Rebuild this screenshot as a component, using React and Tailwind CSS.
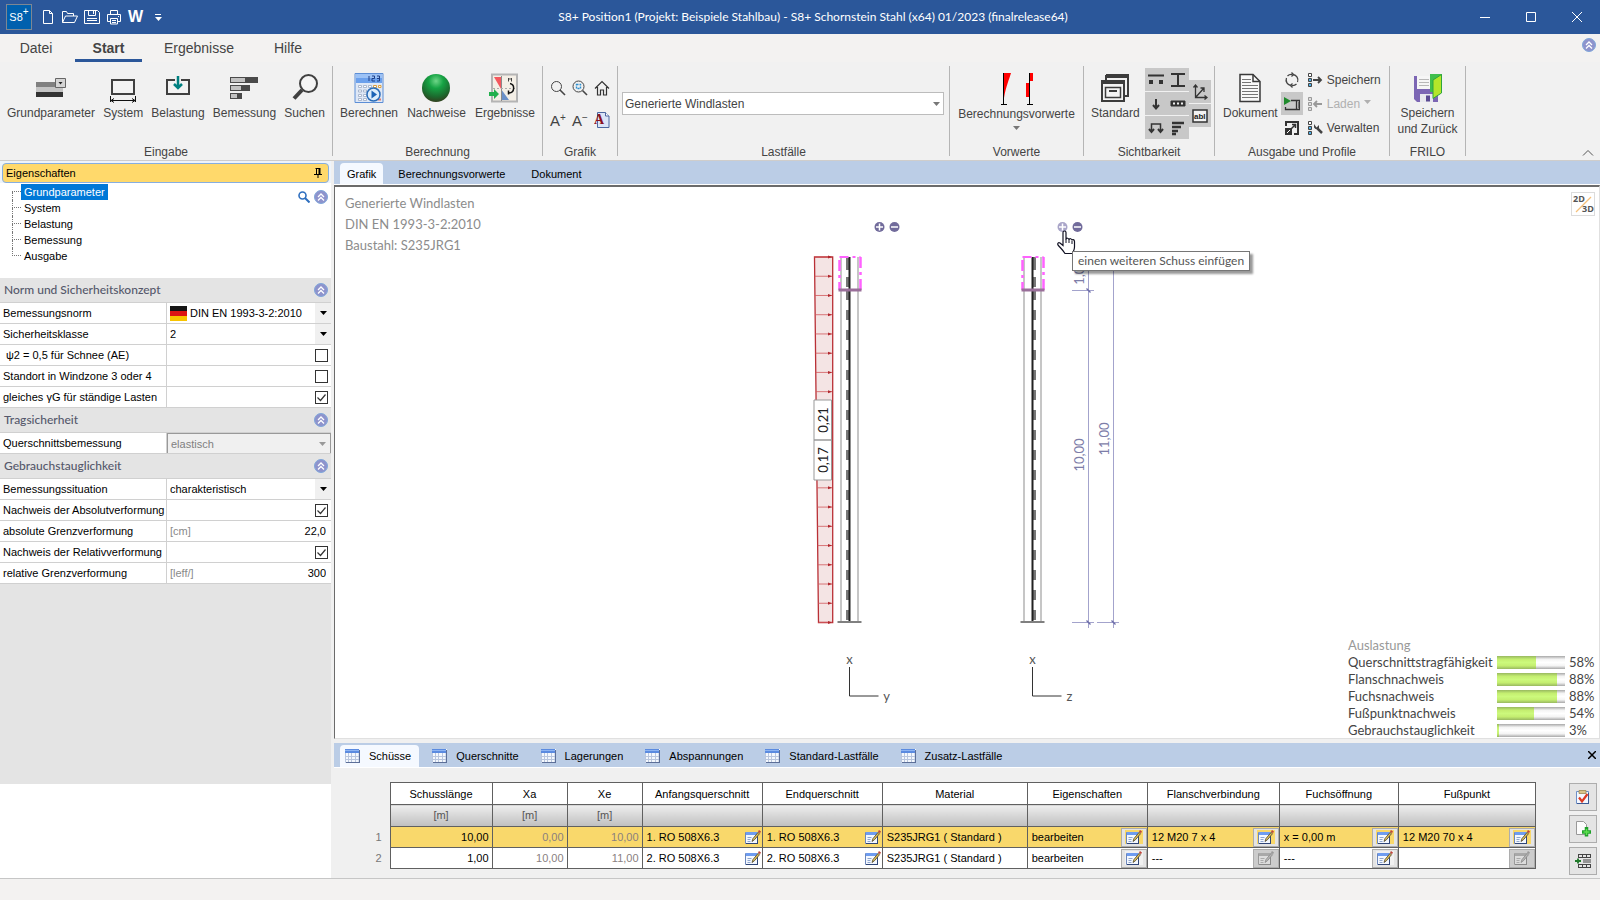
import { useState } from 'react';

/* ---------- small shared icons ---------- */

const Caret = ({ className = '' }) => (
  <svg viewBox="0 0 7 4" className={`h-1 w-[7px] ${className}`} aria-hidden="true">
    <path d="M0 0h7L3.5 4z" fill="currentColor" />
  </svg>
);

const CollapseIcon = () => (
  <svg viewBox="0 0 14 14" className="h-3.5 w-3.5" fill="none" aria-hidden="true">
    <circle cx="7" cy="7" r="6.5" fill="#8e93cc" stroke="#7fa6da" />
    <path d="M4 7l3-3 3 3M4 10.5l3-3 3 3" stroke="#fff" strokeWidth="1.3" />
  </svg>
);

const TableIcon = () => (
  <svg viewBox="0 0 15 14" className="h-3.5 w-[15px]" aria-hidden="true">
    <path d="M0 0h15v14H0z" fill="#f4f8fd" />
    <path d="M0 0h14v4H0z" fill="#5b8be0" />
    <path d="M0 1h14v1H0z" fill="#8db4f2" />
    <path d="M0.5 4v9.5h13.5V4M3.5 4v9M6.5 4v9M10.5 4v9M0 7.5h14M0 10.5h14" stroke="#b9c6de" fill="none" />
    <path d="M14.5 1v13M1 13.5h14" stroke="#5c6f98" />
  </svg>
);

const EditIcon = ({ muted = false }) => (
  <svg viewBox="0 0 16 14" className="h-3.5 w-4" aria-hidden="true">
    <path d="M.5 2.5h12v11H.5z" fill={muted ? '#dcdcdc' : '#f4f8ff'} stroke={muted ? '#9a9a9a' : '#6c86ba'} />
    <path d="M12.5 4v9.500M1 13.500h12" stroke={muted ? '#8a8a8a' : '#2f4577'} />
    <path d="M1 2h11v3H1z" fill={muted ? '#a8a8a8' : '#6e9cf0'} />
    <path d="M2.5 7.5h4M2.5 9.5h3M2.5 11.5h3" stroke={muted ? '#aaa' : '#8ea6cf'} />
    <path d="M7 11.5l1-3 5-6 1.500 1.200-5 6z" fill={muted ? '#b5b5b5' : '#e0c15c'} stroke={muted ? '#8a8a8a' : '#4a4128'} strokeWidth="0.800" />
    <path d="M13 1.5l1-1.5 2 1.5-1 1.8z" fill={muted ? '#999' : '#c0453b'} />
  </svg>
);

/* ---------- ribbon icons ---------- */

const GrundparameterIcon = () => (
  <svg viewBox="0 0 32 32" className="h-8 w-8">
    <path d="M1 10h21v5H1z" fill="#808080" />
    <path d="M1 15h27v5H1z" fill="#c4c4c4" />
    <path d="M1 20h27v5H1z" fill="#333" />
    <path d="M20.5 6.5h10v9h-10z" fill="#d5d5d5" stroke="#666" />
    <path d="M23.5 10h4l-2 2.5z" fill="#222" />
  </svg>
);

const SystemIcon = () => (
  <svg viewBox="0 0 32 32" className="h-8 w-8" fill="none" stroke="#404040">
    <path d="M5 8h22v14H5z" strokeWidth="2" fill="#f3f3f3" />
    <path d="M3.5 24v6M28.5 24v6M4 28.5h24" stroke="#111" />
    <path d="M7 26.5l-3 2 3 2M25 26.5l3 2-3 2" stroke="#111" />
  </svg>
);

const BelastungIcon = () => (
  <svg viewBox="0 0 32 32" className="h-8 w-8" fill="none">
    <path d="M5 8h22v14H5z" fill="#f3f3f3" stroke="#404040" strokeWidth="2" />
    <path d="M13 5h6v5h-6z" fill="#f1f1f1" />
    <path d="M16 4v12M12 12l4 4 4-4" stroke="#008080" strokeWidth="2.5" />
  </svg>
);

const BemessungIcon = () => (
  <svg viewBox="0 0 32 32" className="h-8 w-8">
    <path d="M2 5h28v6H2zM2 13h20v6H2zM2 21h12v6H2z" fill="#4a4a4a" />
    <path d="M3 6h14v4H3zM3 14h10v4H3zM3 22h6v4H3z" fill="#c2c2c2" />
  </svg>
);

const SuchenIcon = () => (
  <svg viewBox="0 0 32 32" className="h-8 w-8" fill="none" stroke="#404040">
    <circle cx="19.5" cy="11.5" r="8.500" strokeWidth="2" fill="#f5f5f5" />
    <path d="M13 18l-8 8.500" strokeWidth="4" />
  </svg>
);

const BerechnenIcon = () => (
  <svg viewBox="0 0 32 32" className="h-8 w-8">
    <path d="M2 1.5h28v29H2z" fill="#dfe8f6" stroke="#5c8ed6" />
    <path d="M3 2h26v9H3z" fill="#6ba0ec" />
    <path d="M3 2h26v4H3z" fill="#9cc2f6" />
    <path d="M16 4v5M19 4h2.5v2.5H19V9h3M24 4h2.5v5H24M24 6.5h2.5" stroke="#1e3f86" fill="none" />
    <path d="M5.5 13.5h3v2h-3zM10.5 13.5h3v2h-3zM15.5 13.5h3v2h-3zM5.5 18h3v2h-3zM10.5 18h3v2h-3zM5.5 22.5h3v2h-3zM10.5 22.5h3v2h-3zM5.5 26.5h3v2h-3zM10.5 26.5h3v2h-3z" fill="#fff" stroke="#9aa9c4" strokeWidth="0.800" />
    <path d="M20.5 13.5h3v2h-3zM25.5 13.5h2.5v2h-2.5z" fill="#fff" stroke="#e0a03c" />
    <path d="M25 26.5h3v2h-3z" fill="#e07a6a" />
    <circle cx="20.5" cy="22.5" r="6.5" fill="#dcecfb" stroke="#2a6cb8" strokeWidth="1.5" />
    <path d="M18.5 18.5l5.5 4-5.5 4z" fill="#1b62b5" />
  </svg>
);

const NachweiseIcon = () => (
  <svg viewBox="0 0 32 32" className="h-8 w-8">
    <defs>
      <radialGradient id="ball" cx="50%" cy="25%" r="75%">
        <stop offset="0" stopColor="#6fd688" />
        <stop offset="0.35" stopColor="#16a344" />
        <stop offset="0.75" stopColor="#1c6a2e" />
        <stop offset="1" stopColor="#31401f" />
      </radialGradient>
    </defs>
    <circle cx="16" cy="16" r="14" fill="url(#ball)" />
  </svg>
);

const ErgebnisseIcon = () => (
  <svg viewBox="0 0 32 32" className="h-8 w-8">
    <path d="M3 2.500h25v27H3z" fill="#f4efe6" stroke="#b4b4b4" strokeWidth="2" />
    <path d="M5 5h7v12z" fill="#f4585e" />
    <path d="M12 17v11h8z" fill="#6a90c8" />
    <path d="M12.500 4v25" stroke="#8a8a8a" />
    <path d="M4 16.5h23" stroke="#aaa" strokeDasharray="2 2" />
    <path d="M19.500 9.500V6l1.500 1.500L22.500 6v3.500" stroke="#444" fill="none" />
    <path d="M21 11.500c5 1 5 9-1 9.500M19.500 18.500v4" stroke="#111" strokeWidth="1.500" fill="none" />
    <path d="M0 20h5v-3l5 5-5 5v-3H0z" fill="#22b04c" />
  </svg>
);

const VorwerteIcon = () => (
  <svg viewBox="0 0 34 34" className="h-[34px] w-[34px]">
    <path d="M4 1h7C9 8 6 14 4 26z" fill="#f00" />
    <path d="M3.5 1v32M1 32.5h6" stroke="#000" fill="none" />
    <path d="M29 1h4v8h-4zM26 11h4v14h-4z" fill="#f00" />
    <path d="M29.5 1v32M27 32.5h6" stroke="#000" fill="none" />
  </svg>
);

const StandardIcon = () => (
  <svg viewBox="0 0 32 32" className="h-8 w-8" fill="none" stroke="#3c3c3c" strokeWidth="2">
    <path d="M7 2h23v4H7z" fill="#3c3c3c" stroke="none" />
    <path d="M7 3v6M29 3v21h-4" />
    <path d="M3 9h22v20H3z" fill="#f3f3f3" />
    <path d="M2 8h24v4H2z" fill="#3c3c3c" stroke="none" />
    <path d="M6.5 15.5h15v10h-15z" strokeWidth="1.5" />
    <path d="M10 19h8" />
  </svg>
);

const DokumentIcon = () => (
  <svg viewBox="0 0 32 32" className="h-8 w-8" fill="none" stroke="#3a3a3a">
    <path d="M6 2.5h13l7 7v20H6z" fill="#fafafa" strokeWidth="1.5" />
    <path d="M19 2.5v7h7" strokeWidth="1.5" />
    <path d="M8 7.5h9M8 10.5h9M8 13.5h16M8 16.5h16M8 19.5h16M8 22.5h16M8 25.5h16" stroke="#777" />
  </svg>
);

const SpeichernZurueckIcon = () => (
  <svg viewBox="0 0 32 32" className="h-8 w-8">
    <path d="M2 4h24v26H5l-3-3z" fill="#7c66b4" />
    <path d="M5 4h14v13H5z" fill="#f6f6f6" />
    <path d="M7 7.5h10M7 10.5h10M7 13.5h10" stroke="#b8b8b8" />
    <path d="M8 22h13v8H8z" fill="#e8e8ee" />
    <path d="M14 23.5h4v6h-4z" fill="#5b4a92" />
    <path d="M18 2h12v18H18z" fill="#3fbf4d" />
    <path d="M21 8l8.5-5.5V21L21 26.5z" fill="#b4e62a" stroke="#2fa53c" />
  </svg>
);

/* ---------- title bar ---------- */

const QuickAccess = () => (
  <div className="flex items-center text-white">
    <button aria-label="S8+" className="mr-2 flex h-[26px] w-[26px] items-center justify-center border border-[#7d8793] bg-[#0060ae] text-[11px] leading-none">
      S8<sup className="text-[10px]">+</sup>
    </button>
    <button aria-label="Neu" className="w-[22px]">
      <svg viewBox="0 0 16 16" className="h-4 w-4" fill="none" stroke="#fff">
        <path d="M3.5 1.5h6l3 3v10h-9zM9.5 1.5v3h3" />
      </svg>
    </button>
    <button aria-label="Öffnen" className="w-[22px]">
      <svg viewBox="0 0 16 16" className="h-4 w-4" fill="none" stroke="#fff">
        <path d="M.5 13.5v-11h4l1 2h6v2.5M.5 13.5l3-6.5h12l-3 6.5z" />
      </svg>
    </button>
    <button aria-label="Speichern" className="w-[22px]">
      <svg viewBox="0 0 16 16" className="h-4 w-4" fill="none" stroke="#fff">
        <path d="M.5 1.5h13l2 2v11H.5zM4.5 1.5v5h7v-5M9.5 2v3M3 9.5h10M3 11.5h10" />
      </svg>
    </button>
    <button aria-label="Drucken" className="w-[22px]">
      <svg viewBox="0 0 16 16" className="h-4 w-4" fill="none" stroke="#fff">
        <path d="M4.5 5.5v-4h7v4M4.5 12.5h-3v-7h13v7h-3M4.5 9.5h7v5.5h-7zM6 11.5h4M6 13.5h4M12 7.5h1" />
      </svg>
    </button>
    <button aria-label="Word" className="w-5 text-left text-base font-bold leading-none">W</button>
    <button aria-label="Anpassen" className="ml-1 flex w-3 flex-col items-center gap-0.5">
      <span className="h-px w-1.5 bg-white" />
      <Caret className="w-1.5" />
    </button>
  </div>
);

const TitleBar = () => (
  <header className="grid h-[34px] shrink-0 grid-cols-[1fr_auto_1fr] items-center bg-[#2b579a] pl-1.5 text-white">
    <QuickAccess />
    <h1 className="pl-5 font-[Lato,'Open_Sans',sans-serif] text-xs">
      S8+ Position1 (Projekt: Beispiele Stahlbau) - S8+ Schornstein Stahl (x64) 01/2023 (finalrelease64)
    </h1>
    <div className="flex justify-end">
      <button aria-label="Minimieren" className="grid h-[34px] w-[46px] place-items-center">
        <svg viewBox="0 0 10 10" className="h-2.5 w-2.5" stroke="#fff"><path d="M0 5.5h10" /></svg>
      </button>
      <button aria-label="Maximieren" className="grid h-[34px] w-[46px] place-items-center">
        <svg viewBox="0 0 10 10" className="h-2.5 w-2.5" fill="none" stroke="#fff"><path d="M.5.5h9v9h-9z" /></svg>
      </button>
      <button aria-label="Schließen" className="grid h-[34px] w-[46px] place-items-center">
        <svg viewBox="0 0 10 10" className="h-2.5 w-2.5" stroke="#fff"><path d="M0 0l10 10M10 0L0 10" /></svg>
      </button>
    </div>
  </header>
);

const MENU = ['Datei', 'Start', 'Ergebnisse', 'Hilfe'];

const MenuTabs = () => (
  <nav className="flex h-7 shrink-0 items-stretch bg-[#f3f2f1] pr-1 text-sm text-[#444]">
    {MENU.map((item) => (
      <button
        key={item}
        className={
          item === 'Start'
            ? 'ml-[3px] w-[67px] border-b-[3px] border-[#2b579a] pt-[3px] font-bold'
            : item === 'Datei'
              ? 'w-[72px]'
              : item === 'Hilfe'
                ? 'ml-4 w-16'
                : 'ml-4 w-[82px]'
        }
      >
        {item}
      </button>
    ))}
    <button aria-label="Einklappen" className="ml-auto self-start pt-1">
      <CollapseIcon />
    </button>
  </nav>
);

/* ---------- ribbon ---------- */

const Group = ({ label, width, children }) => (
  <section className={`flex shrink-0 flex-col border-r border-[#b5b5b5] ${width}`}>
    <div className="flex flex-1 pt-1.5">{children}</div>
    <h2 className="h-2.5 text-center leading-3">{label}</h2>
  </section>
);

const BigButton = ({ icon, children }) => (
  <button className="flex flex-col items-center gap-px self-start leading-4">
    {icon}
    <span>{children}</span>
  </button>
);

const Tile = ({ label, children }) => (
  <button aria-label={label} aria-pressed="true" className="grid h-[23px] w-[22px] place-items-center bg-[#c8c8c8]">
    <svg viewBox="0 0 16 16" className="h-4 w-4" fill="none" stroke="#333">{children}</svg>
  </button>
);

const Ribbon = () => (
  <div className="flex h-[99px] shrink-0 items-stretch border-b border-[#cfcdcb] bg-[#f1f1f1] py-1 text-xs text-[#444]">
    <Group label="Eingabe" width="w-[333px]">
      <div className="flex flex-1 justify-between px-[7px]">
        <BigButton icon={<GrundparameterIcon />}>Grundparameter</BigButton>
        <BigButton icon={<SystemIcon />}>System</BigButton>
        <BigButton icon={<BelastungIcon />}>Belastung</BigButton>
        <BigButton icon={<BemessungIcon />}>Bemessung</BigButton>
        <BigButton icon={<SuchenIcon />}>Suchen</BigButton>
      </div>
    </Group>

    <Group label="Berechnung" width="w-[210px]">
      <div className="flex flex-1 justify-between px-[7px]">
        <BigButton icon={<BerechnenIcon />}>Berechnen</BigButton>
        <BigButton icon={<NachweiseIcon />}>Nachweise</BigButton>
        <BigButton icon={<ErgebnisseIcon />}>Ergebnisse</BigButton>
      </div>
    </Group>

    <Group label="Grafik" width="w-[75px]">
      <div className="grid flex-1 grid-cols-3 grid-rows-[32px_32px] place-items-center px-1">
        <button aria-label="Lupe">
          <svg viewBox="0 0 16 16" className="h-4 w-4" fill="none" stroke="#444">
            <circle cx="6.5" cy="6.5" r="5" /><path d="M10 10l5 5" strokeWidth="1.6" />
          </svg>
        </button>
        <button aria-label="Ausschnitt">
          <svg viewBox="0 0 16 16" className="h-4 w-4" fill="none" stroke="#444">
            <circle cx="6.5" cy="6.5" r="5.500" /><path d="M10.500 10.500l4.500 4.500" strokeWidth="1.6" />
            <path d="M4.5 4.5h4v4h-4z" stroke="#2d8fd0" strokeWidth="1.4" strokeDasharray="2 1" />
          </svg>
        </button>
        <button aria-label="Gesamtansicht">
          <svg viewBox="0 0 16 16" className="h-4 w-4" fill="none" stroke="#333" strokeWidth="1.2">
            <path d="M1 8.5l7-7 7 7M3.5 7v8h3v-5h3v5h3V7" />
          </svg>
        </button>
        <button aria-label="Schrift größer" className="text-[15px] leading-none">A<sup className="text-[10px]">+</sup></button>
        <button aria-label="Schrift kleiner" className="text-[15px] leading-none">A<sup className="text-[10px]">−</sup></button>
        <button aria-label="Schriftart">
          <svg viewBox="0 0 16 16" className="h-4 w-4">
            <path d="M3.500.5h8l3.500 3.500v11.500H3.500z" fill="#dbe5f7" stroke="#4c67a0" />
            <path d="M11.500.5V4H15" fill="#fff" stroke="#4c67a0" />
            <text x="0" y="12" fontSize="14" fontWeight="bold" fill="#8b1220" className="font-['Liberation_Serif',serif]">A</text>
          </svg>
        </button>
      </div>
    </Group>

    <Group label="Lastfälle" width="w-[332px]">
      <div className="grid flex-1 items-start pl-1 pr-[5px] pt-5">
        <select aria-label="Lastfälle" className="col-start-1 row-start-1 h-[23px] w-full appearance-none rounded-none border border-[#bcbcbc] bg-white px-0.5 pt-px">
          <option>Generierte Windlasten</option>
        </select>
        <Caret className="pointer-events-none col-start-1 row-start-1 mr-1 mt-2.5 w-1.5 justify-self-end text-[#777]" />
      </div>
    </Group>

    <Group label="Vorwerte" width="w-[134px]">
      <button className="flex flex-1 flex-col items-center self-start leading-4">
        <VorwerteIcon />
        <span>Berechnungsvorwerte</span>
        <Caret className="mt-1 w-1.5 text-[#777]" />
      </button>
    </Group>

    <Group label="Sichtbarkeit" width="w-[131px]">
      <div className="flex flex-1 pl-[7px]">
        <BigButton icon={<StandardIcon />}>Standard</BigButton>
        <div className="-mt-1 ml-auto mr-[3px] flex items-start">
          <div className="grid grid-cols-2 gap-y-px">
            <Tile label="Auflager"><path d="M0 3.5h16" strokeWidth="2" /><path d="M1 8h4v4H1zM11 8h4v4h-4z" fill="#333" stroke="none" /></Tile>
            <Tile label="Querschnitt"><path d="M1 2h14M1 14h14M8 2v12" strokeWidth="2" /></Tile>
            <Tile label="Lasten"><path d="M8 3v9M5 9l3 3.500L11 9" strokeWidth="2" /></Tile>
            <Tile label="Bemaßung"><path d="M1 5h14v5H1z" fill="#333" /><path d="M3 6.500h2v2H3zM7 6.500h2v2H7zM11 6.500h2v2h-2z" fill="#eee" stroke="none" /></Tile>
            <Tile label="Lastbild"><path d="M3.500 11V4h9v7" strokeWidth="1.500" /><path d="M1 9l2.500 3L6 9M10 9l2.500 3L15 9" strokeWidth="2" /></Tile>
            <Tile label="Ausnutzung"><path d="M2 3h12M2 7h9M2 11h6M2 14h4" strokeWidth="2.5" /></Tile>
          </div>
          <div className="mt-3 grid gap-y-px">
            <Tile label="Achsen"><path d="M3.5 1v12.5H15M1.5 3.5l2-2.5 2 2.5M12.5 11.5l2.5 2-2.5 2M3.5 13.5L12 4M8.5 4H12v4" strokeWidth="1.3" /></Tile>
            <Tile label="Texte">
              <path d="M1 2h14v12H1z" fill="#f3f3f3" strokeWidth="1.5" />
              <text x="2" y="11" fontSize="8" fontWeight="bold" fill="#222" stroke="none">abl</text>
            </Tile>
          </div>
        </div>
      </div>
    </Group>

    <Group label="Ausgabe und Profile" width="w-[175px]">
      <div className="flex flex-1 pl-2">
        <BigButton icon={<DokumentIcon />}>Dokument</BigButton>
        <div className="-mt-1 ml-[3px] grid h-[71px] grid-cols-[22px_auto] grid-rows-[23px_23px_23px] gap-y-px">
          <button aria-label="Aktualisieren" className="grid place-items-center">
            <svg viewBox="0 0 16 16" className="h-4 w-4" fill="none" stroke="#444" strokeWidth="1.300">
              <path d="M9 2.500a5.500 5.500 0 0 1 4.500 7.500M7 13.500A5.500 5.500 0 0 1 2.500 6M3.500 4a5.500 5.500 0 0 1 5-1.500M12.500 12a5.500 5.500 0 0 1-5 1.500" />
              <path d="M7.500.5l2 2-2 2M8.500 11.500l-2 2 2 2" />
            </svg>
          </button>
          <button className="flex items-center gap-1 pl-1">
            <svg viewBox="0 0 16 16" className="h-4 w-4" fill="none" stroke="#444">
              <path d="M1.5 1.5h3v3h-3z" fill="#fff" /><path d="M1.5 6.5h3v3h-3zM1.5 11.5h3v3h-3z" fill="#4fb0e8" />
              <path d="M6 8h8M11 5l3 3-3 3" strokeWidth="1.8" />
            </svg>
            Speichern
          </button>
          <button aria-label="Vorschau" className="grid place-items-center bg-[#c8c8c8]">
            <svg viewBox="0 0 16 16" className="h-4 w-4" fill="none" stroke="#333">
              <path d="M7 4.500h8.500v9H1.500V11M12.500 5v8" strokeWidth="1.300" /><path d="M14 7h1M14 9h1M14 11h1" />
              <path d="M0 1l7 4-7 4z" fill="#1f8a2c" stroke="none" />
            </svg>
          </button>
          <button disabled className="flex items-center gap-1 pl-1 text-[#b0b0b0]">
            <svg viewBox="0 0 16 16" className="h-4 w-4" fill="none" stroke="#999">
              <path d="M1.5 1.5h3v3h-3zM1.5 6.5h3v3h-3zM1.5 11.5h3v3h-3z" fill="#ddd" />
              <path d="M15 8H7M10 5L7 8l3 3" strokeWidth="1.8" />
            </svg>
            Laden
            <Caret className="mb-1 w-1.5" />
          </button>
          <button aria-label="Vergrößern" className="grid place-items-center">
            <svg viewBox="0 0 16 16" className="h-4 w-4" fill="none" stroke="#333">
              <path d="M2 6V2h12v12h-4" strokeWidth="2" /><path d="M1 8h7v7H1z" fill="#333" stroke="none" />
              <path d="M3 13l3-3" stroke="#fff" /><path d="M7 9l4-4M8 4.5h3.5V8" strokeWidth="1.5" />
            </svg>
          </button>
          <button className="flex items-center gap-1 pl-1">
            <svg viewBox="0 0 16 16" className="h-4 w-4" fill="none" stroke="#444">
              <path d="M1.5 1.5h3v3h-3z" fill="#fff" /><path d="M1.5 6.5h3v3h-3zM1.5 11.5h3v3h-3z" fill="#4fb0e8" />
              <path d="M10 8l5 5" strokeWidth="2.500" />
              <path d="M7 4v3.500l1.500 1.500H11l1-1V5L9.500 7.500z" fill="#444" stroke="none" />
            </svg>
            Verwalten
          </button>
        </div>
      </div>
    </Group>

    <Group label="FRILO" width="w-[76px]">
      <button className="flex flex-1 flex-col items-center self-start leading-4">
        <SpeichernZurueckIcon />
        <span className="mt-px">Speichern</span>
        <span>und Zurück</span>
      </button>
    </Group>

    <button aria-label="Menüband reduzieren" className="ml-auto mr-1.5 self-end">
      <svg viewBox="0 0 12 6" className="h-1.5 w-3" fill="none" stroke="#555"><path d="M1 5.5l5-5 5 5" /></svg>
    </button>
  </div>
);

/* ---------- properties panel ---------- */

const TREE = ['Grundparameter', 'System', 'Belastung', 'Bemessung', 'Ausgabe'];

const Flag = () => (
  <svg viewBox="0 0 17 15" className="h-[15px] w-[17px]">
    <path d="M0 0h17v5H0z" fill="#151515" />
    <path d="M0 5h17v5H0z" fill="#dc1414" />
    <path d="M0 10h17v5H0z" fill="#f8c400" />
  </svg>
);

const SECTIONS = [
  {
    title: 'Norm und Sicherheitskonzept',
    rows: [
      { id: 'norm', label: 'Bemessungsnorm', type: 'select', value: 'DIN EN 1993-3-2:2010', flag: true },
      { id: 'klasse', label: 'Sicherheitsklasse', type: 'select', value: '2' },
      { id: 'psi2', label: 'ψ2 = 0,5 für Schnee (AE)', type: 'check', value: false, indent: true },
      { id: 'windzone', label: 'Standort in Windzone 3 oder 4', type: 'check', value: false },
      { id: 'gamma', label: 'gleiches γG für ständige Lasten', type: 'check', value: true },
    ],
  },
  {
    title: 'Tragsicherheit',
    rows: [{ id: 'querschnitt', label: 'Querschnittsbemessung', type: 'select', value: 'elastisch', disabled: true }],
  },
  {
    title: 'Gebrauchstauglichkeit',
    rows: [
      { id: 'situation', label: 'Bemessungssituation', type: 'select', value: 'charakteristisch' },
      { id: 'absolut', label: 'Nachweis der Absolutverformung', type: 'check', value: true },
      { id: 'absGrenz', label: 'absolute Grenzverformung', type: 'number', value: '22,0', unit: '[cm]' },
      { id: 'relativ', label: 'Nachweis der Relativverformung', type: 'check', value: true },
      { id: 'relGrenz', label: 'relative Grenzverformung', type: 'number', value: '300', unit: '[leff/]' },
    ],
  },
];

const Field = ({ row }) => {
  if (row.type === 'select') {
    return (
      <div className={`flex h-full items-center ${row.disabled ? 'border border-b-0 border-[#999] bg-[#f0f0f0] text-[#808080]' : ''}`}>
        {row.flag && <span className="pl-[3px]"><Flag /></span>}
        <div className="grid h-full flex-1 items-center">
          <select
            id={row.id}
            disabled={row.disabled}
            className="col-start-1 row-start-1 h-full w-full appearance-none bg-transparent px-[3px] pt-px opacity-100"
          >
            <option>{row.value}</option>
          </select>
          <span className={`pointer-events-none col-start-1 row-start-1 grid h-full w-4 place-items-center justify-self-end ${row.disabled ? 'text-[#999]' : 'bg-[#f0f0f0] text-black'}`}>
            <Caret className="w-1.5" />
          </span>
        </div>
      </div>
    );
  }
  if (row.type === 'check') {
    return (
      <div className="flex h-full items-center justify-end pr-[3px]">
        <span className="grid">
          <input
            id={row.id}
            type="checkbox"
            defaultChecked={row.value}
            className="peer col-start-1 row-start-1 h-[13px] w-[13px] appearance-none border border-[#333] bg-white"
          />
          <svg viewBox="0 0 13 13" className="pointer-events-none invisible col-start-1 row-start-1 h-[13px] w-[13px] peer-checked:visible" fill="none" stroke="#333">
            <path d="M2.5 6.5l3 3 5-6" strokeWidth="1.2" />
          </svg>
        </span>
      </div>
    );
  }
  return (
    <div className="flex h-full items-center pl-[3px] pr-[5px]">
      <span className="text-[#8a8a8a]">{row.unit}</span>
      <input id={row.id} type="text" defaultValue={row.value} className="w-full min-w-0 flex-1 bg-transparent text-right" />
    </div>
  );
};

const PropertiesPanel = () => (
  <aside className="flex w-[331px] shrink-0 flex-col bg-white text-[11px] text-black">
    <div className="bg-[#eef4fb] px-0.5 pt-0.5">
      <h2 className="flex h-5 items-center justify-between rounded-sm border border-[#86aee0] bg-[#ffd96b] pl-[3px] pr-1.5">
        Eigenschaften
        <button aria-label="Anheften">
          <svg viewBox="0 0 8 10" className="h-2.5 w-2" fill="none" stroke="#000">
            <path d="M2.5 0v6M1.5.5h4.5M0 6.5h8M4 6.5V10" /><path d="M5.5 0v6" strokeWidth="2" />
          </svg>
        </button>
      </h2>
    </div>

    <div className="flex h-[95px] shrink-0 items-start justify-between pr-[3px]">
      <ul className="ml-3 mt-px">
        {TREE.map((node, i) => (
          <li key={node} className="flex h-4 items-stretch">
            <span className="flex w-[9px] flex-col">
              <span className={`h-2 w-full border-b border-dotted border-[#777] ${i > 0 ? 'border-l' : ''}`} />
              <span className={`w-full flex-1 border-dotted border-[#777] ${i < TREE.length - 1 ? 'border-l' : ''}`} />
            </span>
            <button className={i === 0 ? 'bg-[#0078d7] px-[3px] leading-4 text-white' : 'pl-[3px] leading-4'}>{node}</button>
          </li>
        ))}
      </ul>
      <div className="mt-[7px] flex items-center gap-1">
        <button aria-label="Suchen">
          <svg viewBox="0 0 12 12" className="h-3 w-3" fill="none" stroke="#2f6fbf">
            <circle cx="4.5" cy="4.5" r="3.5" strokeWidth="1.6" /><path d="M7 7l4.5 4.5" strokeWidth="2" />
          </svg>
        </button>
        <button aria-label="Alle einklappen"><CollapseIcon /></button>
      </div>
    </div>

    {SECTIONS.map((section) => (
      <section key={section.title}>
        <h3 className="flex h-[25px] items-center justify-between border-b border-[#d0d0d0] bg-[#e4e4e4] pl-1 pr-[3px] font-[Lato,'Open_Sans',sans-serif] text-xs font-medium text-[#55586b]">
          {section.title}
          <button aria-label={`${section.title} einklappen`}><CollapseIcon /></button>
        </h3>
        {section.rows.map((row) => (
          <div key={row.id} className="flex h-[21px] border-b border-[#d0d0d0]">
            <label htmlFor={row.id} className={`w-[167px] shrink-0 border-r border-[#d0d0d0] leading-5 whitespace-nowrap ${row.indent ? 'pl-1.5' : 'pl-[3px]'}`}>
              {row.label}
            </label>
            <div className="min-w-0 flex-1">
              <Field row={row} />
            </div>
          </div>
        ))}
      </section>
    ))}
    <div className="h-[200px] bg-[#e4e4e4]" />
  </aside>
);

/* ---------- drawing ---------- */

const ARROWS = Array.from({ length: 20 }, (_, i) => {
  const y = 257 + (i * 365.5) / 19;
  return { y, x: 814.5 + (i * 4) / 19 };
});

// side +1 / -1: which side of the axis carries the dashed reference fibre
const Stack = ({ x, side }) => (
  <g fill="none">
    <path d={`M${x - 8.5} 257V622M${x + 8.5} 257V622`} stroke="#b4b4b4" strokeWidth="1.5" />
    <path d={`M${x + side * 2} 257V270M${x + side * 2} 277V287`} stroke="#777" strokeWidth="3" />
    <path d={`M${x + side * 2} 290V622`} stroke="#777" strokeWidth="3" strokeDasharray="10 10" />
    <path d={`M${x} 257V623`} stroke="#222" strokeWidth="2" />
    <path d={`M${x - 10} 257h21`} stroke="#ff62ff" strokeWidth="2" strokeDasharray="9 4 3 4" />
    <path d={`M${x - 10} 260v30M${x + 11} 257v33`} stroke="#ff62ff" strokeWidth="2.5" strokeDasharray="11 4 3 4" />
    <path d={`M${x - 11} 290h23`} stroke="#9a6f9a" strokeWidth="3" />
    <path d={`M${x - 12} 622h24`} stroke="#808080" strokeWidth="2" />
  </g>
);

const PlusMinus = ({ x, faded }) => (
  <g>
    <circle cx={x} cy="227" r="5" fill={faded ? '#a9a5c8' : '#716b9b'} />
    <path d={`M${x - 3.5} 227h7M${x} 223.5v7`} stroke="#fff" strokeWidth="1.5" />
    <circle cx={x + 15} cy="227" r="5" fill="#716b9b" />
    <path d={`M${x + 11.5} 227h7`} stroke="#fff" strokeWidth="1.5" />
  </g>
);

const Axes = ({ x, name }) => (
  <g>
    <path d={`M${x} 667v29h29`} fill="none" stroke="#333" />
    <text x={x} y="664" textAnchor="middle">x</text>
    <text x={x + 37} y="701" textAnchor="middle">{name}</text>
  </g>
);

const Drawing = () => (
  <svg viewBox="727 187 480 552" className="h-[552px] w-[480px] text-[13px]" fill="#555">
    <path d="M814.5 257h18.2v365.5h-14.2z" fill="#f4e4e4" stroke="#b93036" strokeWidth="1.3" />
    {ARROWS.map((a) => (
      <g key={a.y}>
        <path d={`M${a.x} ${a.y}H832`} stroke="#d0585c" strokeWidth="0.8" />
        <path d={`M828 ${a.y - 1.5}l4 1.5-4 1.5z`} fill="#b0272d" />
      </g>
    ))}
    <g stroke="#999" fill="#fff">
      <path d="M814 400h17.5v40H814zM814 440h17.5v40H814z" />
    </g>
    <text transform="translate(828 420) rotate(-90)" textAnchor="middle" fill="#222">0,21</text>
    <text transform="translate(828 460) rotate(-90)" textAnchor="middle" fill="#222">0,17</text>

    <Stack x={849.5} side={-1} />
    <Stack x={1032.5} side={1} />
    <PlusMinus x={879.5} />
    <PlusMinus x={1062.5} faded />

    <g stroke="#a3a3cc" fill="none">
      <path d="M1088.5 251v377M1113.5 251v377M1072 290.5h22M1072 622.5h22M1097 622.5h22" />
      <path d="M1086.5 288.5l4 4M1086.5 620.5l4 4M1111.5 620.5l4 4" stroke="#6c6ca8" strokeWidth="1.3" />
    </g>
    <g fill="#7d7da8">
      <text transform="translate(1084 272) rotate(-90)" textAnchor="middle">1,00</text>
      <text transform="translate(1084 455) rotate(-90)" textAnchor="middle">10,00</text>
      <text transform="translate(1109 439) rotate(-90)" textAnchor="middle">11,00</text>
    </g>

    <Axes x={849.5} name="y" />
    <Axes x={1032.5} name="z" />
  </svg>
);

const USAGE = [
  { label: 'Querschnittstragfähigkeit', percent: 58 },
  { label: 'Flanschnachweis', percent: 88 },
  { label: 'Fuchsnachweis', percent: 88 },
  { label: 'Fußpunktnachweis', percent: 54 },
  { label: 'Gebrauchstauglichkeit', percent: 3 },
];

const Utilisation = () => (
  <div className="absolute right-0 -bottom-px w-[251px] text-[13px] leading-[17px] text-[#444]">
    <h3 className="text-[#999]">Auslastung</h3>
    {USAGE.map((u) => (
      <div key={u.label} className="flex items-center">
        <span className="w-[149px] whitespace-nowrap">{u.label}</span>
        <span className="h-[13px] w-[68px] bg-[linear-gradient(#a8a8a8,#f4f4f4_25%,#fff_50%,#f4f4f4_75%,#a8a8a8)]">
          <span
            className="block h-full bg-[linear-gradient(#98b860,#c4ee70_25%,#ccf97c_50%,#c4ee70_75%,#98b860)]"
            style={{ width: `${u.percent}%` }}
          />
        </span>
        <span className="pl-1">{u.percent}%</span>
      </div>
    ))}
  </div>
);

const Canvas = () => (
  <div className="relative flex flex-1 justify-center overflow-hidden border-t-2 border-l border-r border-b border-t-[#6b6b6b] border-r-[#e0e0e0] border-b-[#e0e0e0] border-l-[#6b6b6b] bg-white font-[Lato,'Open_Sans',sans-serif]">
    <div className="absolute top-1.5 left-2.5 text-[13px] leading-[21px] text-[#8c8c8c]">
      <p>Generierte Windlasten</p>
      <p>DIN EN 1993-3-2:2010</p>
      <p>Baustahl: S235JRG1</p>
    </div>
    <button aria-label="2D/3D" className="absolute top-[5px] right-1 border border-[#dcdcdc]">
      <svg viewBox="0 0 22 22" className="h-[22px] w-[22px] font-['Open_Sans',sans-serif] text-[9px] font-bold" fill="#555">
        <path d="M4 19L19 4" stroke="#f5c07a" strokeWidth="1.2" />
        <text x="1" y="9">2D</text>
        <text x="10" y="19">3D</text>
      </svg>
    </button>

    <div className="relative">
      <Drawing />
      <svg viewBox="0 0 20 26" className="absolute top-[43px] left-[329px] h-[26px] w-5">
        <path
          d="M7 2.5c0-2 3-2 3 0v7c0-2 3-1.5 3 .5 0-2 3-1.5 3 .5 0-1.5 2.5-1 2.5 1V17c0 3-1 4-2 6.5H9C7 20 4.500 18 2 15c-1-1.5.5-3 2-2l3 2.5z"
          fill="#fff" stroke="#112" strokeWidth="1.2"
        />
        <path d="M10 9v4M13 10v3M16 11v3" stroke="#112" />
      </svg>
      <div role="tooltip" className="absolute top-[64px] left-[345px] h-5 border border-[#767676] bg-white px-[5px] text-xs leading-[18px] whitespace-nowrap text-[#555] shadow-[3px_3px_2px_rgba(0,0,0,0.4)]">
        einen weiteren Schuss einfügen
      </div>
    </div>

    <Utilisation />
  </div>
);

const VIEWS = ['Grafik', 'Berechnungsvorwerte', 'Dokument'];

const ViewTabs = () => {
  const [active, setActive] = useState('Grafik');
  return (
    <div role="tablist" className="flex h-6 shrink-0 items-end gap-1 border-b border-white bg-[#bbcde6] pl-1.5 text-[11px] text-black">
      {VIEWS.map((view) => (
        <button
          key={view}
          role="tab"
          aria-selected={view === active}
          onClick={() => setActive(view)}
          className={`h-[21px] px-[7px] pt-px ${view === active ? 'rounded-t-sm bg-[#f5f9ff]' : 'mx-1'}`}
        >
          {view}
        </button>
      ))}
    </div>
  );
};

/* ---------- table panel ---------- */

const TABLE_TABS = ['Schüsse', 'Querschnitte', 'Lagerungen', 'Abspannungen', 'Standard-Lastfälle', 'Zusatz-Lastfälle'];

const COLUMNS = [
  { title: 'Schusslänge', unit: '[m]', width: 'w-[102px]' },
  { title: 'Xa', unit: '[m]', width: 'w-[75px]' },
  { title: 'Xe', unit: '[m]', width: 'w-[75px]' },
  { title: 'Anfangsquerschnitt', width: 'w-[120px]' },
  { title: 'Endquerschnitt', width: 'w-[120px]' },
  { title: 'Material', width: 'w-[145px]' },
  { title: 'Eigenschaften', width: 'w-[120px]' },
  { title: 'Flanschverbindung', width: 'w-[132px]' },
  { title: 'Fuchsöffnung', width: 'w-[119px]' },
  { title: 'Fußpunkt', width: 'w-[137px]' },
];

const ROWS = [
  [
    { text: '10,00', kind: 'num' }, { text: '0,00', kind: 'calc' }, { text: '10,00', kind: 'calc' },
    { text: '1. RO 508X6.3', kind: 'link' }, { text: '1. RO 508X6.3', kind: 'link' },
    { text: 'S235JRG1 ( Standard )' }, { text: 'bearbeiten', kind: 'edit' },
    { text: '12 M20 7 x 4', kind: 'edit' }, { text: 'x = 0,00 m', kind: 'edit' }, { text: '12 M20 70 x 4', kind: 'edit' },
  ],
  [
    { text: '1,00', kind: 'num' }, { text: '10,00', kind: 'calc' }, { text: '11,00', kind: 'calc' },
    { text: '2. RO 508X6.3', kind: 'link' }, { text: '2. RO 508X6.3', kind: 'link' },
    { text: 'S235JRG1 ( Standard )' }, { text: 'bearbeiten', kind: 'edit' },
    { text: '---', kind: 'edit', off: true }, { text: '---', kind: 'edit' }, { text: '', kind: 'edit', off: true },
  ],
];

const Cell = ({ cell, selected }) => {
  if (cell.kind === 'num') return <div className="pr-[3px] text-right">{cell.text}</div>;
  if (cell.kind === 'calc') return <div className="pr-[3px] text-right text-[#8a7f7f]">{cell.text}</div>;
  if (cell.kind === 'link') {
    return (
      <div className="flex items-center justify-between pr-px pl-1">
        {cell.text}
        <button aria-label="Querschnitt bearbeiten"><EditIcon /></button>
      </div>
    );
  }
  if (cell.kind === 'edit') {
    return (
      <div className="flex items-center justify-between pl-1">
        {cell.text}
        <button
          aria-label="Bearbeiten"
          disabled={cell.off}
          className={`ml-auto grid h-[19px] w-[26px] place-items-center border border-[#adadad] ${cell.off ? 'bg-[#cccccc]' : 'bg-[#e4e4e4]'}`}
        >
          <span className={`px-px ${cell.off ? '' : selected ? 'bg-[#f9d86b]' : 'bg-[#f1f1f1]'}`}>
            <EditIcon muted={cell.off} />
          </span>
        </button>
      </div>
    );
  }
  return <div className="pl-1">{cell.text}</div>;
};

const DataTable = () => (
  <table className="w-full table-fixed border-collapse text-[11px] text-black">
    <thead>
      <tr className="h-[22px]">
        <td className="w-14" />
        {COLUMNS.map((c) => (
          <th key={c.title} scope="col" className={`border border-[#606060] bg-white p-0 pt-px font-normal ${c.width}`}>{c.title}</th>
        ))}
      </tr>
      <tr className="h-[22px]">
        <td />
        {COLUMNS.map((c) => (
          <td key={c.title} className="border border-[#606060] bg-linear-to-b from-[#eeeeee] to-[#bfbfbf] p-0 text-center text-[#555]">{c.unit}</td>
        ))}
      </tr>
    </thead>
    <tbody>
      {ROWS.map((row, r) => (
        <tr key={r} className="h-[21px]">
          <th scope="row" className="p-0 pr-2 text-right font-normal text-[#777]">{r + 1}</th>
          {row.map((cell, c) => (
            <td key={c} className={`overflow-hidden border border-[#606060] p-0 whitespace-nowrap ${r === 0 ? 'bg-[#f9d86b]' : 'bg-white'}`}>
              <Cell cell={cell} selected={r === 0} />
            </td>
          ))}
        </tr>
      ))}
    </tbody>
  </table>
);

const SideButton = ({ label, children }) => (
  <button aria-label={label} className="grid h-7 w-7 place-items-center border border-[#adadad] bg-[#e4e4e4]">
    <svg viewBox="0 0 16 16" className="h-4 w-4" fill="none">{children}</svg>
  </button>
);

const TablePanel = () => (
  <div className="shrink-0 pt-1">
    <div role="tablist" className="flex h-[25px] items-end border-b border-white bg-[#bbcde6] pr-1 pl-1.5 text-[11px] text-black">
      {TABLE_TABS.map((tab, i) => (
        <button
          key={tab}
          role="tab"
          aria-selected={i === 0}
          className={`flex h-[22px] items-center gap-[9px] pr-2 pl-[5px] ${i === 0 ? 'mr-2 rounded-t-sm bg-[#f5f9ff]' : 'mr-[9px]'}`}
        >
          <TableIcon />
          {tab}
        </button>
      ))}
      <button aria-label="Schließen" className="mb-2 ml-auto">
        <svg viewBox="0 0 8 8" className="h-2 w-2" stroke="#000" strokeWidth="1.5"><path d="M0 0l8 8M8 0L0 8" /></svg>
      </button>
    </div>
    <div className="flex items-start pt-[14px] pr-[3px] pb-[3px]">
      <div className="min-w-0 flex-1"><DataTable /></div>
      <div className="mt-px ml-[33px] flex flex-col gap-1">
        <SideButton label="Prüfen">
          <path d="M1.500 2.500h12v12h-12z" fill="#f4f8ff" stroke="#6d8fc6" />
          <path d="M13.500 4v11M2 14.500h12" stroke="#3c5a94" />
          <path d="M4 1.500h7v3H4z" fill="#d9c48a" stroke="#a08a50" strokeWidth="0.800" />
          <path d="M4 8.500l3 4L12.500 5" stroke="#dc3a22" strokeWidth="2.2" />
        </SideButton>
        <SideButton label="Hinzufügen">
          <path d="M1.5.5h7l3 3v10h-10z" fill="#fcfcfc" stroke="#999" />
          <path d="M11.5 6v9.500M7 11h9" stroke="#1fa02a" strokeWidth="3.5" />
          <path d="M11.5 8v6M8.5 11h6" stroke="#5ee04f" strokeWidth="1.5" />
        </SideButton>
        <SideButton label="Zeile einfügen">
          <path d="M3 1.5h12M3 4.5h12M3 11.5h12M3 14.5h12M3.5 1v4M7.5 1v4M11.5 1v4M15.5 1v4M3.5 11v4M7.5 11v4M11.5 11v4M15.5 11v4M8 7h8M8 9h8" stroke="#444" />
          <path d="M3 5.5v5M0 8h6" stroke="#1f7a2a" strokeWidth="1.8" />
        </SideButton>
      </div>
    </div>
  </div>
);

const App = () => (
  <div className="flex h-screen flex-col overflow-hidden bg-[#f0f0f0] font-['Liberation_Sans',Arial,sans-serif]">
    <TitleBar />
    <MenuTabs />
    <Ribbon />
    <div className="flex min-h-0 flex-1">
      <PropertiesPanel />
      <main className="ml-[3px] flex min-w-0 flex-1 flex-col">
        <ViewTabs />
        <Canvas />
        <TablePanel />
      </main>
    </div>
    <footer className="h-[22px] shrink-0 border-t border-[#c6c6c6] bg-[#f3f2f1]" />
  </div>
);

export default App;
